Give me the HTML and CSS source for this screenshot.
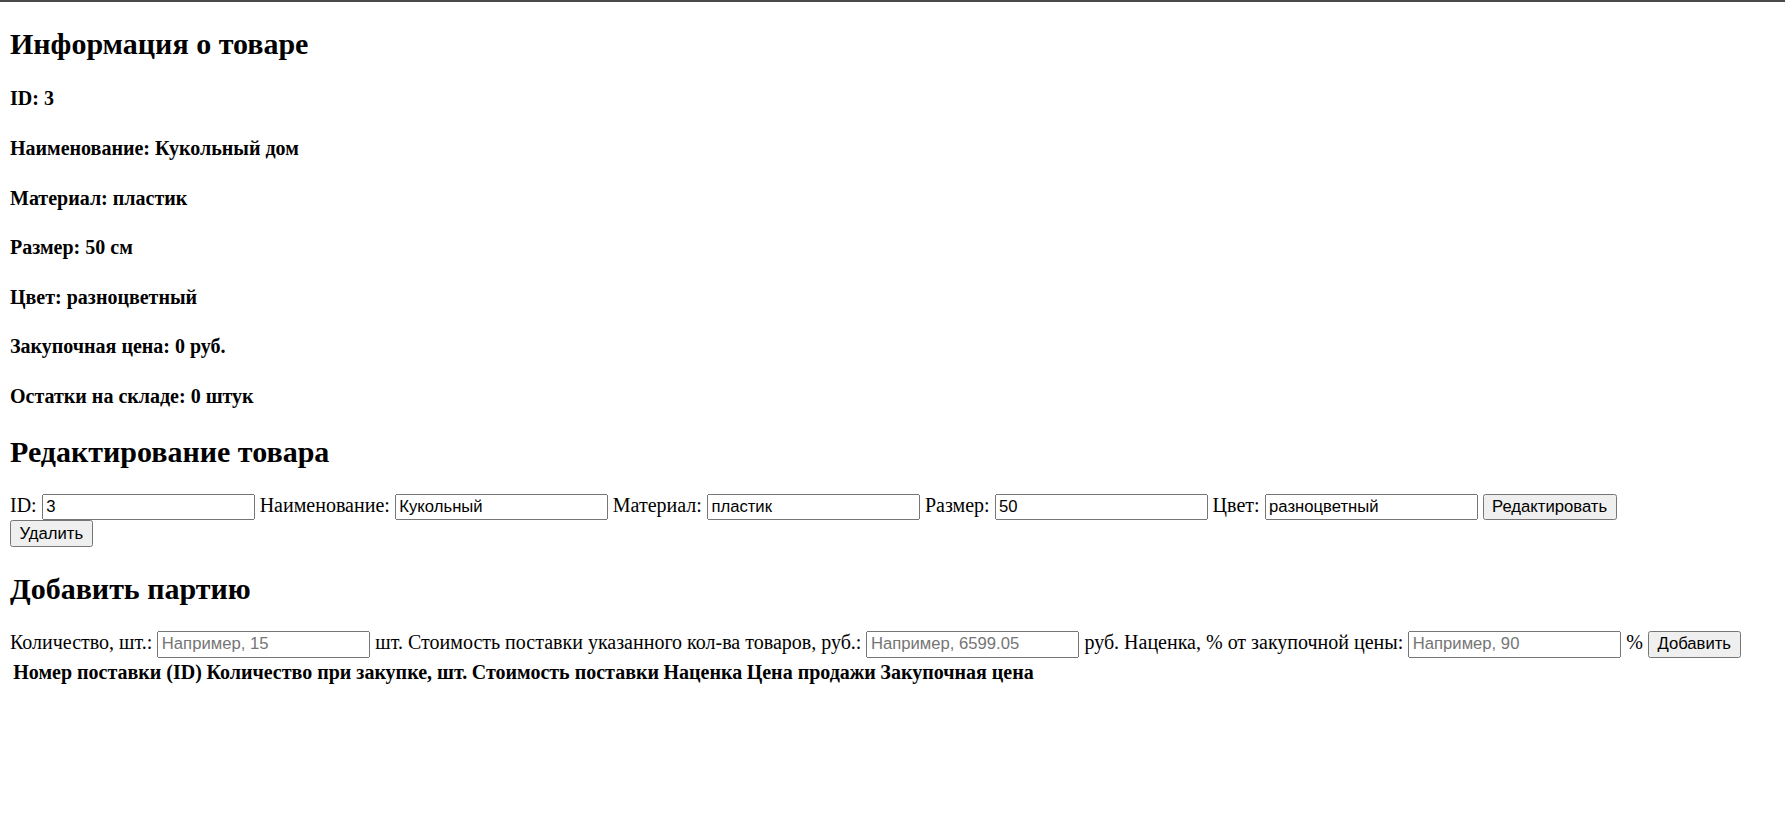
FILE: index.html
```html
<!DOCTYPE html>
<html lang="ru">
<head>
<meta charset="utf-8">
<title>Информация о товаре</title>
<link rel="stylesheet" href="styles.css">
</head>
<body class="page">
  <h2 class="section-title">Информация о товаре</h2>
  <h4 class="info-item">ID: 3</h4>
  <h4 class="info-item">Наименование: Кукольный дом</h4>
  <h4 class="info-item">Материал: пластик</h4>
  <h4 class="info-item">Размер: 50 см</h4>
  <h4 class="info-item">Цвет: разноцветный</h4>
  <h4 class="info-item">Закупочная цена: 0 руб.</h4>
  <h4 class="info-item">Остатки на складе: 0 штук</h4>

  <h2 class="section-title">Редактирование товара</h2>
  <form class="inline-form">
    <label>ID: <input class="field" type="text" value="3"></label>
    <label>Наименование: <input class="field" type="text" value="Кукольный"></label>
    <label>Материал: <input class="field" type="text" value="пластик"></label>
    <label>Размер: <input class="field" type="text" value="50"></label>
    <label>Цвет: <input class="field" type="text" value="разноцветный"></label>
    <button class="btn" type="button">Редактировать</button>
  </form>
  <form class="inline-form">
    <button class="btn" type="button">Удалить</button>
  </form>

  <h2 class="section-title">Добавить партию</h2>
  <form class="inline-form">
    <label>Количество, шт.: <input class="field" type="text" placeholder="Например, 15"></label> шт.
    <label>Стоимость поставки указанного кол-ва товаров, руб.: <input class="field" type="text" placeholder="Например, 6599.05"></label> руб.
    <label>Наценка, % от закупочной цены: <input class="field" type="text" placeholder="Например, 90"></label> %
    <button class="btn" type="button">Добавить</button>
  </form>
  <table class="batches">
    <thead>
      <tr>
        <th>Номер поставки (ID)</th>
        <th>Количество при закупке, шт.</th>
        <th>Стоимость поставки</th>
        <th>Наценка</th>
        <th>Цена продажи</th>
        <th>Закупочная цена</th>
      </tr>
    </thead>
    <tbody></tbody>
  </table>
</body>
</html>
```
FILE: styles.css
```css
html {
  border-top: 2px solid #4a4a4a;
  background: #ffffff;
}

.page {
  zoom: 1.25;
  margin: 0 8px 8px;
  font-family: "Liberation Serif", "Times New Roman", serif;
  font-size: 16px;
  color: #000000;
}

.section-title {
  font-size: 24px;
  font-weight: bold;
  margin: 19.92px 0;
}

.info-item {
  font-size: 16px;
  font-weight: bold;
  margin: 21.28px 0;
}

.inline-form {
  margin: 0;
}

.field {
  box-sizing: border-box;
  width: 170.4px;
  height: 21.4px;
  font-family: "Liberation Sans", Arial, sans-serif;
  font-size: 13.333px;
  color: #000000;
}

.field::placeholder {
  color: #757575;
}

.btn {
  box-sizing: border-box;
  height: 21.4px;
  font-family: "Liberation Sans", Arial, sans-serif;
  font-size: 13.333px;
  color: #000000;
}

.batches th {
  font-weight: bold;
  text-align: center;
}
```
